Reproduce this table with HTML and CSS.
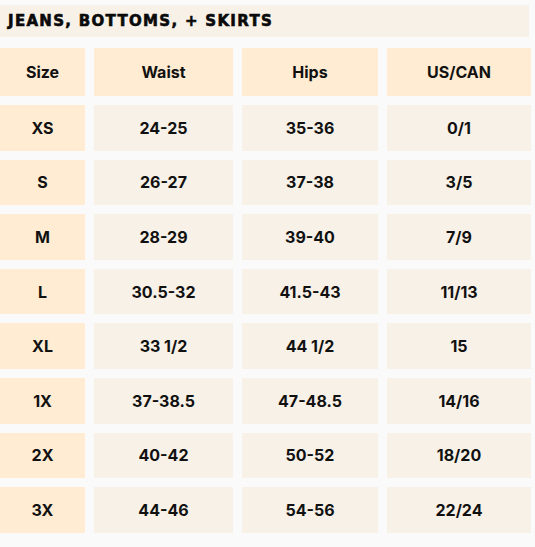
FILE: index.html
```html
<!DOCTYPE html>
<html>
<head>
<meta charset="utf-8">
<link rel="stylesheet" href="styles.css">
</head>
<body>
<div class="page">
  <div class="title">JEANS, BOTTOMS, + SKIRTS</div>
  <div class="chart">
    <div class="cell head">Size</div>
    <div class="cell head">Waist</div>
    <div class="cell head">Hips</div>
    <div class="cell head">US/CAN</div>

    <div class="cell size">XS</div><div class="cell">24-25</div><div class="cell">35-36</div><div class="cell">0/1</div>
    <div class="cell size">S</div><div class="cell">26-27</div><div class="cell">37-38</div><div class="cell">3/5</div>
    <div class="cell size">M</div><div class="cell">28-29</div><div class="cell">39-40</div><div class="cell">7/9</div>
    <div class="cell size">L</div><div class="cell">30.5-32</div><div class="cell">41.5-43</div><div class="cell">11/13</div>
    <div class="cell size">XL</div><div class="cell">33 1/2</div><div class="cell">44 1/2</div><div class="cell">15</div>
    <div class="cell size">1X</div><div class="cell">37-38.5</div><div class="cell">47-48.5</div><div class="cell">14/16</div>
    <div class="cell size">2X</div><div class="cell">40-42</div><div class="cell">50-52</div><div class="cell">18/20</div>
    <div class="cell size">3X</div><div class="cell">44-46</div><div class="cell">54-56</div><div class="cell">22/24</div>
  </div>
</div>
</body>
</html>
```
FILE: styles.css
```css
html, body {
  margin: 0;
  padding: 0;
  background: #fafafa;
}
.page {
  width: 535px;
  padding-top: 5px;
  font-family: Inter, "Open Sans", "Liberation Sans", sans-serif;
  color: #111;
}
.title {
  width: 521px;
  height: 32px;
  padding-left: 8px;
  background: #f8f1e7;
  font-family: "DejaVu Sans", "Liberation Sans", sans-serif;
  font-weight: 700;
  font-size: 15px;
  letter-spacing: 1.3px;
  display: flex;
  align-items: center;
  color: #0a0a0a;
  -webkit-text-stroke: 0.6px #0a0a0a;
}
.chart {
  margin-top: 11px;
  display: grid;
  grid-template-columns: 85px 139px 136px 144px;
  grid-template-rows: 48px repeat(8, 45.6px);
  column-gap: 9px;
  row-gap: 9px;
}
.cell {
  background: #f8f1e7;
  display: flex;
  align-items: center;
  justify-content: center;
  font-size: 16px;
  font-weight: 700;
}
.head, .size {
  background: #ffecd2;
}
```
